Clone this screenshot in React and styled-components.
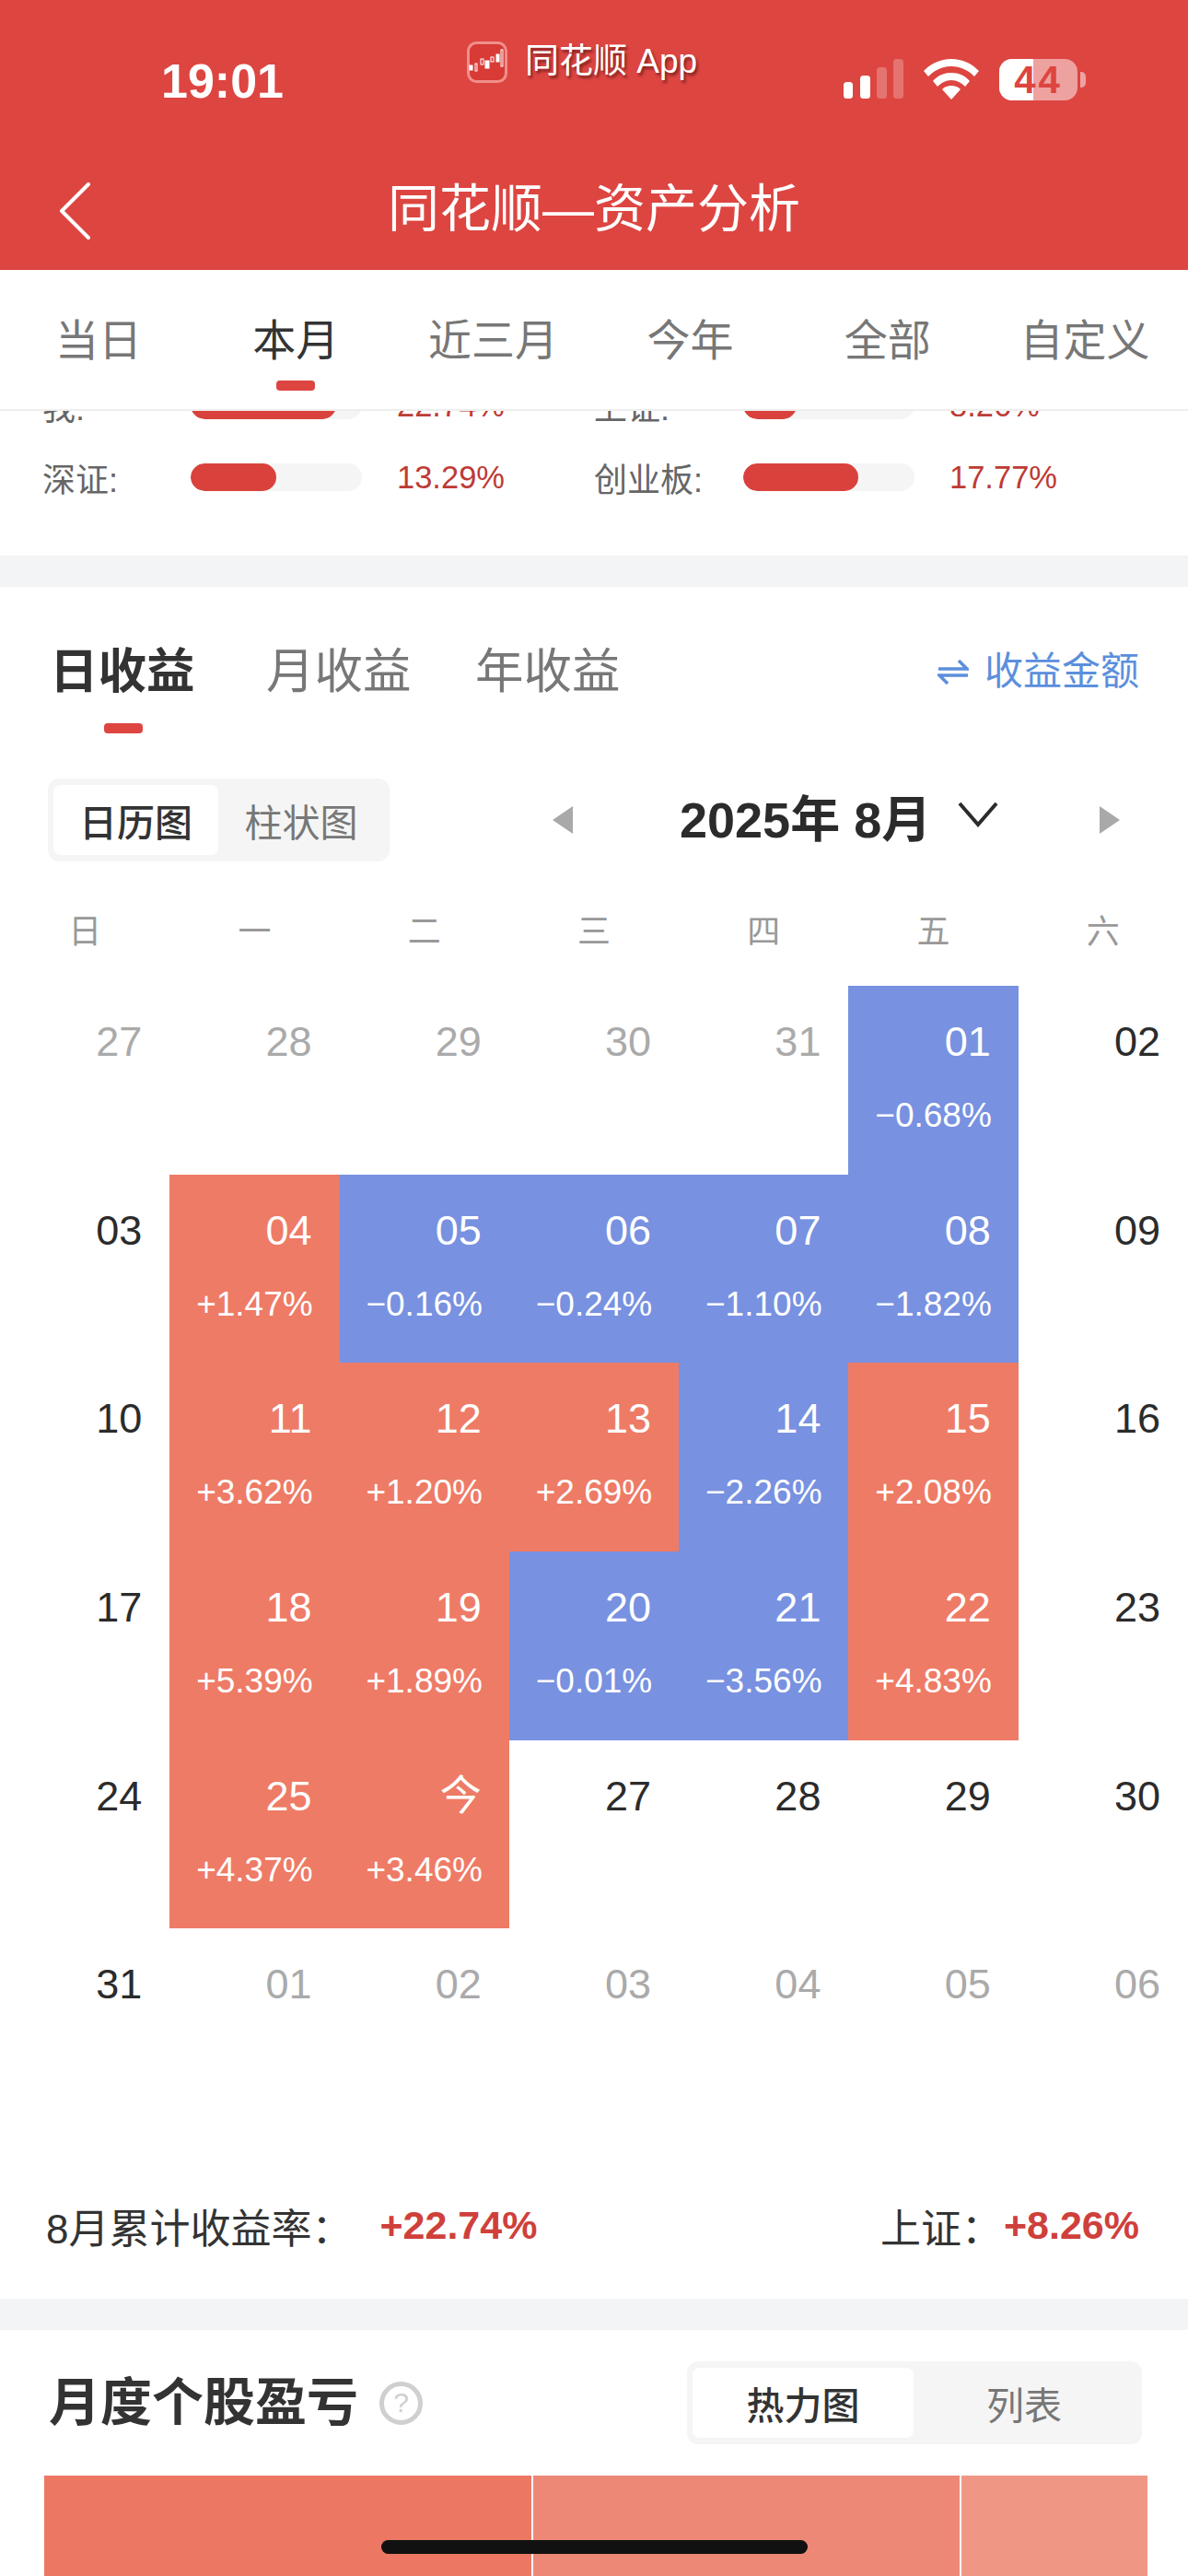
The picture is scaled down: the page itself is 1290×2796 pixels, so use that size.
import styled, { createGlobalStyle } from "styled-components";

const RED = "#dd4541";
const FONT = `"Liberation Sans", "Noto Sans CJK SC", sans-serif`;

const GlobalStyle = createGlobalStyle`
  html, body {
    margin: 0;
    padding: 0;
    background: #fff;
    font-family: ${FONT};
  }
  * {
    box-sizing: border-box;
  }
`;

const Screen = styled.div`
  position: relative;
  width: 1290px;
  height: 2796px;
  overflow: hidden;
  display: flex;
  flex-direction: column;
  background: #fff;
`;

// Cabeçalho vermelho
const Header = styled.header`
  height: 293px;
  flex: none;
  background: ${RED};
  color: #fff;
  display: flex;
  flex-direction: column;
`;

const StatusBar = styled.div`
  height: 170px;
  display: grid;
  grid-template-columns: 507px 409px 1fr;
`;

const Clock = styled.div`
  padding: 58px 0 0 175px;
  font-size: 52px;
  line-height: 60px;
  font-weight: 700;
  letter-spacing: 0;
`;

const AppBadge = styled.div`
  padding-top: 45px;
  display: flex;
  align-items: flex-start;
  gap: 19px;
`;

const AppName = styled.span`
  font-size: 37px;
  line-height: 44px;
  text-shadow: 2px 3px 3px rgba(90, 20, 20, 0.7);
`;

const StatusIcons = styled.div`
  padding-top: 64px;
  display: flex;
  align-items: flex-start;
`;

const Battery = styled.div`
  position: relative;
  width: 85px;
  height: 45px;
  margin-left: 22px;
  border-radius: 14px;
  overflow: hidden;
  background: rgba(255, 255, 255, 0.5);
  color: ${RED};
  font-size: 42px;
  line-height: 46px;
  font-weight: 700;
  letter-spacing: 3px;
  text-align: center;
`;

const BatteryFill = styled.span`
  position: absolute;
  inset: 0 48px 0 0;
  background: #fff;
`;

const BatteryText = styled.span`
  position: relative;
`;

const BatteryNub = styled.div`
  width: 6px;
  height: 17px;
  margin: 14px 0 0 3px;
  border-radius: 0 5px 5px 0;
  background: rgba(255, 255, 255, 0.5);
`;

const NavBar = styled.div`
  height: 123px;
  display: grid;
  grid-template-columns: 150px 1fr 150px;
  align-items: start;
`;

const BackButton = styled.div`
  padding: 28px 0 0 64px;
  line-height: 0;
`;

const NavTitle = styled.h1`
  margin: 0;
  padding-top: 23px;
  font-size: 56px;
  line-height: 68px;
  font-weight: 400;
  text-align: center;
`;

// Abas de período
const PeriodTabs = styled.nav`
  height: 153px;
  flex: none;
  position: relative;
  z-index: 1;
  background: #fff;
  border-bottom: 2px solid #eeeeee;
  padding-right: 5px;
  display: grid;
  grid-template-columns: repeat(6, 1fr);
`;

const PeriodTab = styled.div`
  position: relative;
  padding-top: 49px;
  text-align: center;
  font-size: 47px;
  line-height: 56px;
  color: ${({ $active }) => ($active ? "#333" : "#777")};
`;

const PeriodMark = styled.span`
  position: absolute;
  left: 50%;
  top: 120px;
  width: 42px;
  height: 11px;
  margin-left: -21px;
  border-radius: 4px;
  background: ${RED};
`;

const Viewport = styled.main`
  flex: 1;
  min-height: 0;
  overflow: hidden;
`;

const Content = styled.div`
  margin-top: -45px;
`;

// Índices
const Stats = styled.section`
  padding-bottom: 46px;
`;

const StatRow = styled.div`
  height: 78px;
  display: grid;
  grid-template-columns: 160px 225px 214px 161px 225px 1fr;
  padding-left: 46px;
  align-items: center;
`;

const StatLabel = styled.span`
  font-size: 36px;
  color: #666;
`;

const StatTrack = styled.div`
  width: 186px;
  height: 30px;
  margin-left: 1px;
  border-radius: 15px;
  overflow: hidden;
  background: #f5f5f5;
`;

const StatFill = styled.div`
  height: 100%;
  border-radius: 15px;
  background: #d9423c;
`;

const StatValue = styled.span`
  font-size: 34.5px;
  color: #bd3b36;
`;

const Gap = styled.div`
  height: ${({ $h }) => $h}px;
  background: #f3f4f6;
`;

// Bloco de rendimento
const ReturnsHead = styled.div`
  height: 208px;
  display: flex;
  align-items: flex-start;
  padding: 61px 53px 0 54px;
`;

const ReturnTab = styled.div`
  position: relative;
  width: ${({ $w }) => $w}px;
  font-size: 52.5px;
  line-height: 62px;
  font-weight: ${({ $active }) => ($active ? 700 : 400)};
  color: ${({ $active }) => ($active ? "#333" : "#777")};
`;

const ReturnMark = styled.span`
  position: absolute;
  left: 59px;
  top: 87px;
  width: 42px;
  height: 11px;
  border-radius: 4px;
  background: ${RED};
`;

const AmountLink = styled.div`
  margin-left: auto;
  display: flex;
  align-items: center;
  gap: 17px;
  color: #5c8fdc;
  font-size: 42px;
  line-height: 62px;
`;

const ToolRow = styled.div`
  height: 225px;
  display: flex;
  align-items: flex-start;
`;

const Segment = styled.div`
  width: ${({ $w }) => $w}px;
  height: 90px;
  margin-left: ${({ $left }) => ($left === "auto" ? "auto" : `${$left}px`)};
  padding: 7px 6px;
  flex: none;
  display: flex;
  border-radius: 12px;
  background: #f5f5f5;
`;

const SegmentItem = styled.div`
  width: ${({ $w }) => $w}px;
  display: flex;
  align-items: center;
  justify-content: center;
  border-radius: 8px;
  font-size: 41px;
  font-weight: ${({ $active }) => ($active ? 500 : 400)};
  color: ${({ $active }) => ($active ? "#333" : "#777")};
  background: ${({ $active }) => ($active ? "#fff" : "transparent")};
`;

const MonthNav = styled.div`
  margin-left: 177px;
  height: 90px;
  display: flex;
  align-items: center;
`;

const MonthTitle = styled.div`
  width: 302px;
  margin-left: 116px;
  font-size: 54px;
  line-height: 70px;
  font-weight: 700;
  color: #2b2b2b;
`;

const Chevron = styled.span`
  line-height: 0;
  margin: -12px 0 0 0;
`;

const NextArrow = styled.span`
  line-height: 0;
  margin-left: 110px;
`;

const WeekHead = styled.div`
  display: grid;
  grid-template-columns: repeat(7, 1fr);
  height: 0;
`;

const WeekDay = styled.div`
  margin-top: -83px;
  height: 50px;
  text-align: center;
  font-size: 36px;
  line-height: 50px;
  color: #999;
`;

// Calendário
const Calendar = styled.div`
  display: grid;
  grid-template-columns: repeat(7, 1fr);
  grid-auto-rows: 204.67px;
`;

const toneColor = { up: "#ee7b66", down: "#7891e0" };

const Day = styled.div`
  padding: 31px 30px 0 0;
  background: ${({ $tone }) => toneColor[$tone] || "transparent"};
  color: ${({ $tone, $muted }) => ($tone ? "#fff" : $muted ? "#aaa" : "#2b2b2b")};
`;

const DayNumber = styled.div`
  text-align: right;
  font-size: 45px;
  line-height: 60px;
`;

const DayChange = styled.div`
  margin: 20px -30px 0 0;
  text-align: center;
  font-size: 37px;
  line-height: 60px;
`;

const Summary = styled.div`
  height: 197px;
  padding: 0 53px 0 50px;
  display: flex;
  justify-content: space-between;
  align-items: flex-start;
  padding-top: 90px;
`;

const SummaryGroup = styled.div`
  display: flex;
  align-items: center;
  gap: ${({ $gap }) => $gap}px;
  height: 56px;
`;

const SummaryLabel = styled.span`
  font-size: 44px;
  color: #333;
`;

const SummaryValue = styled.span`
  font-size: 43px;
  font-weight: 700;
  color: #cf403b;
`;

// Mapa de calor
const HoldingsHead = styled.div`
  height: 158px;
  display: flex;
  align-items: flex-start;
  padding: 34px 50px 0 0;
`;

const HoldingsTitle = styled.h2`
  margin: 0 0 0 53px;
  height: 90px;
  font-size: 56px;
  line-height: 90px;
  font-weight: 700;
  color: #333;
`;

const HelpBadge = styled.span`
  width: 47px;
  height: 47px;
  margin: 22px 0 0 23px;
  flex: none;
  display: flex;
  align-items: center;
  justify-content: center;
  border: 5px solid #cfcfcf;
  border-radius: 50%;
  font-size: 30px;
  color: #cfcfcf;
`;

const HeatMap = styled.div`
  height: 120px;
  padding: 0 44px 0 48px;
  display: flex;
  gap: 2px;
`;

const HeatCell = styled.div`
  width: ${({ $w }) => $w}px;
  background: ${({ $color }) => $color};
`;

const HomeBar = styled.div`
  position: absolute;
  left: 414px;
  top: 2757px;
  width: 463px;
  height: 15px;
  border-radius: 8px;
  background: #111;
`;

const periods = ["当日", "本月", "近三月", "今年", "全部", "自定义"];
const weekDays = ["日", "一", "二", "三", "四", "五", "六"];

const days = [
  ["27", 0, 1], ["28", 0, 1], ["29", 0, 1], ["30", 0, 1], ["31", 0, 1], ["01", "−0.68%"], ["02"],
  ["03"], ["04", "+1.47%"], ["05", "−0.16%"], ["06", "−0.24%"], ["07", "−1.10%"], ["08", "−1.82%"], ["09"],
  ["10"], ["11", "+3.62%"], ["12", "+1.20%"], ["13", "+2.69%"], ["14", "−2.26%"], ["15", "+2.08%"], ["16"],
  ["17"], ["18", "+5.39%"], ["19", "+1.89%"], ["20", "−0.01%"], ["21", "−3.56%"], ["22", "+4.83%"], ["23"],
  ["24"], ["25", "+4.37%"], ["今", "+3.46%"], ["27"], ["28"], ["29"], ["30"],
  ["31"], ["01", 0, 1], ["02", 0, 1], ["03", 0, 1], ["04", 0, 1], ["05", 0, 1], ["06", 0, 1],
];

const LogoIcon = () => (
  <svg width="44" height="45" viewBox="0 0 44 45">
    <rect x="1.5" y="1.5" width="41" height="42" rx="9" fill="#d83a36" stroke="#f08f8b" strokeWidth="3" />
    <g fill="#fff" stroke="#fff">
      <rect x="3" y="26" width="3" height="5" />
      <rect x="9" y="24" width="2" height="8" fill="none" />
      <rect x="15" y="19" width="3" height="6" fill="none" />
      <rect x="20" y="21" width="4" height="8" />
      <rect x="26" y="17" width="3" height="5" fill="none" />
      <rect x="32" y="14" width="3" height="8" />
      <rect x="37" y="9" width="2" height="18" fill="none" />
    </g>
  </svg>
);

const SignalIcon = () => (
  <svg width="65" height="43" viewBox="0 0 65 43">
    <rect x="0" y="25" width="10" height="18" rx="3.5" fill="#fff" />
    <rect x="18" y="18" width="11" height="25" rx="3.5" fill="#fff" />
    <rect x="36" y="9" width="11" height="34" rx="3.5" fill="#fff" fillOpacity="0.25" />
    <rect x="54" y="0" width="11" height="43" rx="3.5" fill="#fff" fillOpacity="0.25" />
  </svg>
);

const WifiIcon = () => (
  <svg width="60" height="44" viewBox="0 0 60 44" style={{ marginLeft: 22 }}>
    <path d="M30 0C18 0 8 5 0 13l5 6C12 12 20 8 30 8s18 4 25 11l5-6C52 5 42 0 30 0Z" fill="#fff" />
    <path d="M30 15c-8 0-15 3-20 9l5 6c4-4 9-7 15-7s11 3 15 7l5-6c-5-6-12-9-20-9Z" fill="#fff" />
    <path d="M30 29c-4 0-7 1-10 4l10 11 10-11c-3-3-6-4-10-4Z" fill="#fff" />
  </svg>
);

const BackIcon = () => (
  <svg width="34" height="62" viewBox="0 0 34 62">
    <path d="M32 2 3 31l29 29" fill="none" stroke="#fff" strokeWidth="4" strokeLinecap="round" strokeLinejoin="round" />
  </svg>
);

const SwapIcon = () => (
  <svg width="34" height="28" viewBox="0 0 34 28">
    <path d="M1 11h31L23 2" fill="none" stroke="#5c8fdc" strokeWidth="3.5" />
    <path d="M33 18H2l9 9" fill="none" stroke="#5c8fdc" strokeWidth="3.5" />
  </svg>
);

const Triangle = ({ flip }) => (
  <svg width="22" height="30" viewBox="0 0 22 30">
    <path d={flip ? "M0 0l22 15L0 30Z" : "M22 0 0 15l22 15Z"} fill="#a9a9a9" />
  </svg>
);

const ChevronDown = () => (
  <svg width="44" height="28" viewBox="0 0 44 28">
    <path d="M2 2l20 23L42 2" fill="none" stroke="#2b2b2b" strokeWidth="4" />
  </svg>
);

const Stat = ({ label, pct, value }) => (
  <>
    <StatLabel>{label}</StatLabel>
    <StatTrack>
      <StatFill style={{ width: `${pct}%` }} />
    </StatTrack>
    <StatValue>{value}</StatValue>
  </>
);

export default function App() {
  return (
    <Screen>
      <GlobalStyle />
      <Header>
        <StatusBar>
          <Clock>19:01</Clock>
          <AppBadge>
            <LogoIcon />
            <AppName>同花顺 App</AppName>
          </AppBadge>
          <StatusIcons>
            <SignalIcon />
            <WifiIcon />
            <Battery>
              <BatteryFill />
              <BatteryText>44</BatteryText>
            </Battery>
            <BatteryNub />
          </StatusIcons>
        </StatusBar>
        <NavBar>
          <BackButton>
            <BackIcon />
          </BackButton>
          <NavTitle>同花顺—资产分析</NavTitle>
        </NavBar>
      </Header>

      <PeriodTabs>
        {periods.map((p, i) => (
          <PeriodTab key={p} $active={i === 1}>
            {p}
            {i === 1 && <PeriodMark />}
          </PeriodTab>
        ))}
      </PeriodTabs>

      <Viewport>
        <Content>
          <Stats>
            <StatRow>
              <Stat label="我:" pct={85} value="22.74%" />
              <Stat label="上证:" pct={31} value="8.26%" />
            </StatRow>
            <StatRow>
              <Stat label="深证:" pct={50} value="13.29%" />
              <Stat label="创业板:" pct={67} value="17.77%" />
            </StatRow>
          </Stats>
          <Gap $h={34} />

          <ReturnsHead>
            <ReturnTab $w={235} $active>
              日收益
              <ReturnMark />
            </ReturnTab>
            <ReturnTab $w={227}>月收益</ReturnTab>
            <ReturnTab $w={200}>年收益</ReturnTab>
            <AmountLink>
              <SwapIcon />
              收益金额
            </AmountLink>
          </ReturnsHead>

          <ToolRow>
            <Segment $w={371} $left={52}>
              <SegmentItem $w={179} $active>日历图</SegmentItem>
              <SegmentItem $w={180}>柱状图</SegmentItem>
            </Segment>
            <MonthNav>
              <Triangle />
              <MonthTitle>2025年 8月</MonthTitle>
              <Chevron>
                <ChevronDown />
              </Chevron>
              <NextArrow>
                <Triangle flip />
              </NextArrow>
            </MonthNav>
          </ToolRow>

          <WeekHead>
            {weekDays.map((d) => (
              <WeekDay key={d}>{d}</WeekDay>
            ))}
          </WeekHead>

          <Calendar>
            {days.map(([num, change, muted], i) => (
              <Day
                key={i}
                $muted={muted}
                $tone={change ? (change[0] === "+" ? "up" : "down") : undefined}
              >
                <DayNumber>{num}</DayNumber>
                {change ? <DayChange>{change}</DayChange> : null}
              </Day>
            ))}
          </Calendar>

          <Summary>
            <SummaryGroup $gap={30}>
              <SummaryLabel>8月累计收益率：</SummaryLabel>
              <SummaryValue>+22.74%</SummaryValue>
            </SummaryGroup>
            <SummaryGroup $gap={2}>
              <SummaryLabel>上证：</SummaryLabel>
              <SummaryValue>+8.26%</SummaryValue>
            </SummaryGroup>
          </Summary>
          <Gap $h={34} />

          <HoldingsHead>
            <HoldingsTitle>月度个股盈亏</HoldingsTitle>
            <HelpBadge>?</HelpBadge>
            <Segment $w={494} $left="auto">
              <SegmentItem $w={240} $active>热力图</SegmentItem>
              <SegmentItem $w={240}>列表</SegmentItem>
            </Segment>
          </HoldingsHead>

          <HeatMap>
            <HeatCell $w={529} $color="#ec7864" />
            <HeatCell $w={463} $color="#ee8876" />
            <HeatCell $w={202} $color="#f09684" />
          </HeatMap>
        </Content>
      </Viewport>
      <HomeBar />
    </Screen>
  );
}
